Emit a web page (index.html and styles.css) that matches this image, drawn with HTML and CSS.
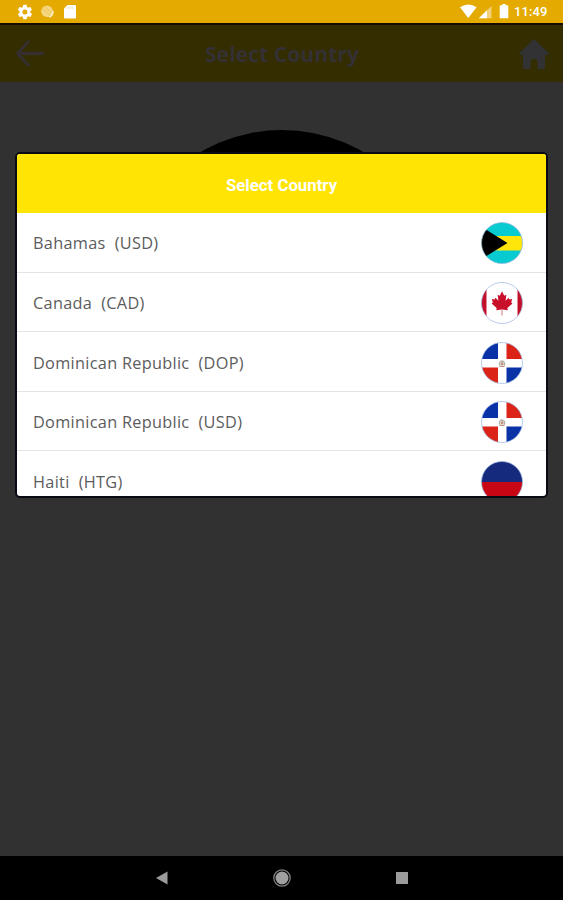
FILE: index.html
```html
<!DOCTYPE html>
<html lang="en">
<head>
<meta charset="utf-8">
<title>Select Country</title>
<link rel="stylesheet" href="styles.css">
</head>
<body>
<div class="screen">
  <header class="status">
    <svg class="status-left" width="80" height="23" viewBox="0 0 80 23">
      <g transform="translate(16.3 3.3) scale(.72)"><path fill="#fff" d="M19.4 13c0-.3.1-.6.1-1s0-.7-.1-1l2.100-1.600c.2-.2.2-.4.1-.6l-2-3.500c-.1-.2-.4-.3-.6-.2l-2.500 1c-.5-.4-1.100-.7-1.700-1L14.500 2.400c0-.2-.2-.4-.5-.4h-4c-.3 0-.5.2-.5.4L9.100 5.100c-.6.2-1.200.6-1.700 1l-2.500-1c-.2-.1-.5 0-.6.2l-2 3.500c-.1.2-.1.500.1.600L4.600 11c0 .3-.1.600-.1 1s0 .7.100 1l-2.100 1.600c-.2.200-.2.400-.1.600l2 3.500c.1.200.4.300.6.200l2.500-1c.5.400 1.100.7 1.700 1l.4 2.700c0 .2.200.4.500.4h4c.3 0 .5-.2.5-.4l.4-2.700c.6-.2 1.200-.6 1.700-1l2.500 1c.2.100.5 0 .6-.2l2-3.500c.1-.2.100-.5-.1-.6zM12 15.500a3.500 3.500 0 1 1 0-7 3.500 3.500 0 0 1 0 7z"/></g>
      <circle cx="47" cy="11.300" r="5.700" fill="#f5d783"/>
      <path d="M49 17a6 6 0 0 0 4-6" fill="none" stroke="#fff3cc" stroke-width="1.500"/>
      <path d="M42.500 8.500l8 7M44.500 6.500l7 6" stroke="#eabd42" stroke-width=".8"/>
      <path d="M67.500 5H75q1 0 1 1v11.500q0 1-1 1H65q-1 0-1-1V8.500z" fill="#fff"/>
      <path d="M67.700 7v2M70 7v2M72.300 7v2" stroke="#f3d078" stroke-width=".7"/>
    </svg>
    <div class="status-right">
      <svg width="54" height="23" viewBox="0 0 54 23">
        <path d="M0 7.300Q8.300 1.500 16.600 7.300L8.300 18z" fill="#fff"/>
        <path d="M31.500 6v12.200H18.800z" fill="#f3d078"/>
        <path d="M27 10.300v7.900h-8.200z" fill="#fff"/>
        <path d="M42.200 4h3.600v1.300h1.700q.8 0 .8.800v11.300q0 .9-.8.900h-7q-.8 0-.8-.9V6.100q0-.8.8-.8h1.700z" fill="#fff"/>
      </svg>
      <span class="clock">11:49</span>
    </div>
  </header>
  <div class="appbar">
    <svg width="30" height="30" viewBox="0 0 30 30"><path d="M29 14.500H3M14 2L2.500 14.500 14 27" fill="none" stroke="#362f32" stroke-width="2.800"/></svg>
    <h1>Select Country</h1>
    <svg class="home" width="30" height="32" viewBox="0 0 30 32"><path d="M15 1L29.500 15v2H26v14h-7.500v-6.500a3.500 3.500 0 0 0-7 0V31H4V17H.5v-2z" fill="#323235"/></svg>
  </div>
  <main class="backdrop">
    <div class="disc"></div>
    <section class="dialog">
      <h2>Select Country</h2>
      <ul>
        <li><span class="name">Bahamas&nbsp; (USD)</span>
          <svg class="flag" viewBox="0 0 42 42"><defs><clipPath id="round"><circle cx="21" cy="21" r="20.500"/></clipPath></defs>
            <g clip-path="url(#round)"><path fill="#08cbd2" d="M0 0h42v42H0z"/><path fill="#ffe60a" d="M0 14h42v14.500H0z"/><path d="M-1 4L26.500 21-1 38z"/></g><circle class="rim" cx="21" cy="21" r="20.500"/></svg></li>
        <li><span class="name">Canada&nbsp; (CAD)</span>
          <svg class="flag" viewBox="0 0 42 42"><g clip-path="url(#round)"><path fill="#fff" d="M0 0h42v42H0z"/><path fill="#c3102a" d="M0 0h5.500v42H0zM36.500 0H42v42h-5.500z"/></g><path transform="translate(1.700 -.3) scale(.92 1)" fill="#c9102b" d="M21 9.500l2.400 4.500 2.300-1-.8 6 3.200-3 .9 1.700 3-.4-1 3.500 1.300 1-5.500 4.500.5 2.200-5.800-.7H20.500l-5.800.7.500-2.200-5.500-4.500 1.300-1-1-3.500 3 .4.900-1.700 3.200 3-.8-6 2.300 1z"/><path d="M20.500 27h1v6.500h-1z" fill="#d4777f"/><circle class="rim" cx="21" cy="21" r="20.500"/></svg></li>
        <li><span class="name">Dominican Republic&nbsp; (DOP)</span>
          <svg class="flag" viewBox="0 0 42 42"><g id="dominican"><g clip-path="url(#round)"><path fill="#fff" d="M0 0h42v42H0z"/><path fill="#0832a5" d="M0 0h17v17H0zM25.500 25.500H42V42H25.500z"/><path fill="#dc2318" d="M25.500 0H42v17H25.500zM0 25.500h17V42H0z"/></g><circle cx="21" cy="21.500" r="3.200" fill="#ddd9ce"/><path d="M18.500 23.500q-1-4 2.500-4.500 3.300.5 2.500 4.500" fill="none" stroke="#a5aa9f"/><path d="M20 20.500h2.200v2.500H20z" fill="#c98d86"/><path d="M18.500 24.500h5" stroke="#c99287"/><circle class="rim" cx="21" cy="21" r="20.500"/></g></svg></li>
        <li><span class="name">Dominican Republic&nbsp; (USD)</span>
          <svg class="flag" viewBox="0 0 42 42"><use href="#dominican"/></svg></li>
        <li><span class="name">Haiti&nbsp; (HTG)</span>
          <svg class="flag" viewBox="0 0 42 42"><g clip-path="url(#round)"><path fill="#152a7c" d="M0 0h42v21H0z"/><path fill="#c90613" d="M0 21h42v21H0z"/></g><circle class="rim" cx="21" cy="21" r="20.500"/></svg></li>
      </ul>
    </section>
  </main>
  <nav class="navbar">
    <svg width="20" height="20" viewBox="0 0 20 20"><path d="M4 10L15.500 3.500v13z" fill="#9b9b9b"/></svg>
    <svg width="20" height="20" viewBox="0 0 20 20"><circle cx="10" cy="10" r="8.200" fill="none" stroke="#858585" stroke-width="1.200"/><circle cx="10" cy="10" r="6.500" fill="#a0a0a0"/></svg>
    <svg width="20" height="20" viewBox="0 0 20 20"><path d="M4 4h12v12H4z" fill="#9b9b9b"/></svg>
  </nav>
</div>
</body>
</html>
```

FILE: styles.css
```css
* { box-sizing: border-box; }
body { margin: 0; }
h1, h2, ul { margin: 0; padding: 0; }
svg { display: block; flex: none; }

.screen {
  display: flex;
  flex-direction: column;
  width: 563px;
  height: 900px;
  overflow: hidden;
  background: #313131;
}

.status {
  display: flex;
  justify-content: space-between;
  height: 25px;
  padding-right: 15px;
  background: #e4aa00;
  border-bottom: 2px solid #140d00;
}
.status-right { display: flex; }
.clock {
  width: 34px;
  font: 500 13px/24px Roboto, sans-serif;
  letter-spacing: .1px;
  color: #fff;
  white-space: nowrap;
}

.appbar {
  display: flex;
  align-items: center;
  justify-content: space-between;
  height: 57px;
  padding: 0 14px 0 15px;
  background: #332d00;
}
.appbar h1 {
  font: 700 21.200px/30px "Open Sans", sans-serif;
  color: #353033;
  white-space: nowrap;
}

.backdrop {
  position: relative;
  flex: 1;
  padding: 70px 15px 0;
}
.disc {
  position: absolute;
  top: 48px;
  left: 119px;
  width: 326px;
  height: 326px;
  border-radius: 50%;
  background: #000;
}
.dialog {
  position: relative;
  width: 533px;
  height: 346px;
  border: 2px solid #080b14;
  border-radius: 5px;
  background: #fff;
  overflow: hidden;
}
.dialog h2 {
  height: 59px;
  background: #ffe404;
  color: #fff;
  font: 700 16.800px/62px Roboto, sans-serif;
  text-align: center;
}
.dialog li {
  display: flex;
  align-items: center;
  justify-content: space-between;
  height: 59.600px;
  padding: 2.400px 23px 0 16px;
  border-bottom: 1px solid #e4e4e4;
}
.name {
  font: 400 16.300px/24px "Open Sans", sans-serif;
  letter-spacing: .3px;
  color: #5c5c5c;
  white-space: nowrap;
}
.flag { width: 42px; height: 42px; }
.rim { fill: none; stroke: #9bb6df; stroke-width: .7; }

.navbar {
  display: flex;
  align-items: center;
  justify-content: center;
  gap: 100px;
  height: 44px;
  background: #000;
}
```
